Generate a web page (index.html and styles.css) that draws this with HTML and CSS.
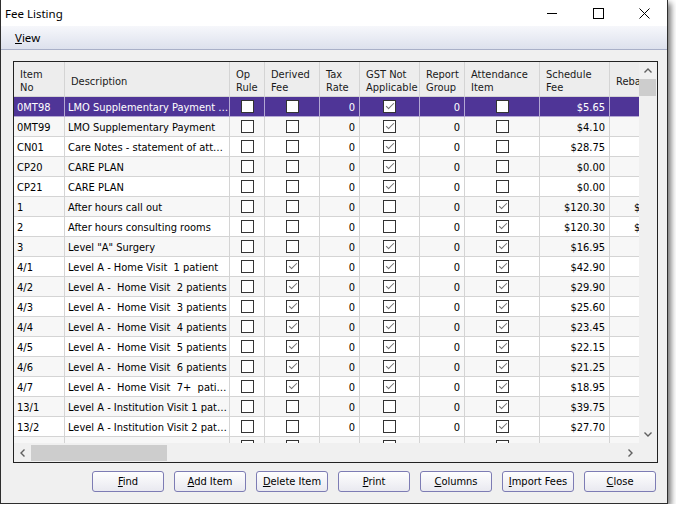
FILE: index.html
```html
<!DOCTYPE html>
<html lang="en">
<head>
    <meta charset="UTF-8">
    <title>Fee Listing</title>
    <link rel="stylesheet" href="styles.css">
</head>
<body>
    <div class="window">
        <div class="titlebar">
            <span class="title">Fee Listing</span>
            <div class="caption">
                <div class="cap-btn">
                    <svg width="10" height="10" viewBox="0 0 10 10"><line x1="0" y1="5.5" x2="10" y2="5.5" stroke="#000" stroke-width="1"/></svg>
                </div>
                <div class="cap-btn">
                    <svg width="11" height="11" viewBox="0 0 11 11"><rect x="0.5" y="0.5" width="10" height="10" fill="none" stroke="#000" stroke-width="1"/></svg>
                </div>
                <div class="cap-btn">
                    <svg width="11" height="11" viewBox="0 0 11 11"><path d="M0.5 0.5 L10.5 10.5 M10.5 0.5 L0.5 10.5" stroke="#000" stroke-width="1"/></svg>
                </div>
            </div>
        </div>

        <div class="menubar">
            <span class="menu-item"><u>V</u>iew</span>
        </div>

        <div class="content">
            <div class="grid">
                <div class="viewport">
                    <div class="row head">
                        <div class="c">Item<br>No</div>
                        <div class="c">Description</div>
                        <div class="c">Op<br>Rule</div>
                        <div class="c">Derived<br>Fee</div>
                        <div class="c">Tax<br>Rate</div>
                        <div class="c">GST Not<br>Applicable</div>
                        <div class="c">Report<br>Group</div>
                        <div class="c">Attendance<br>Item</div>
                        <div class="c">Schedule<br>Fee</div>
                        <div class="c">Rebate</div>
                    </div>

                    <div class="row sel">
                        <div class="c">0MT98</div><div class="c">LMO Supplementary Payment …</div>
                        <div class="c chk"><span class="cb"></span></div><div class="c chk"><span class="cb"></span></div>
                        <div class="c num">0</div><div class="c chk"><span class="cb on"></span></div>
                        <div class="c num">0</div><div class="c chk"><span class="cb"></span></div>
                        <div class="c num">$5.65</div><div class="c num"></div>
                    </div>
                    <div class="row alt">
                        <div class="c">0MT99</div><div class="c">LMO Supplementary Payment</div>
                        <div class="c chk"><span class="cb"></span></div><div class="c chk"><span class="cb"></span></div>
                        <div class="c num">0</div><div class="c chk"><span class="cb on"></span></div>
                        <div class="c num">0</div><div class="c chk"><span class="cb"></span></div>
                        <div class="c num">$4.10</div><div class="c num"></div>
                    </div>
                    <div class="row">
                        <div class="c">CN01</div><div class="c">Care Notes - statement of att…</div>
                        <div class="c chk"><span class="cb"></span></div><div class="c chk"><span class="cb"></span></div>
                        <div class="c num">0</div><div class="c chk"><span class="cb on"></span></div>
                        <div class="c num">0</div><div class="c chk"><span class="cb"></span></div>
                        <div class="c num">$28.75</div><div class="c num"></div>
                    </div>
                    <div class="row alt">
                        <div class="c">CP20</div><div class="c">CARE PLAN</div>
                        <div class="c chk"><span class="cb"></span></div><div class="c chk"><span class="cb"></span></div>
                        <div class="c num">0</div><div class="c chk"><span class="cb on"></span></div>
                        <div class="c num">0</div><div class="c chk"><span class="cb"></span></div>
                        <div class="c num">$0.00</div><div class="c num"></div>
                    </div>
                    <div class="row">
                        <div class="c">CP21</div><div class="c">CARE PLAN</div>
                        <div class="c chk"><span class="cb"></span></div><div class="c chk"><span class="cb"></span></div>
                        <div class="c num">0</div><div class="c chk"><span class="cb on"></span></div>
                        <div class="c num">0</div><div class="c chk"><span class="cb"></span></div>
                        <div class="c num">$0.00</div><div class="c num"></div>
                    </div>
                    <div class="row alt">
                        <div class="c">1</div><div class="c">After hours call out</div>
                        <div class="c chk"><span class="cb"></span></div><div class="c chk"><span class="cb"></span></div>
                        <div class="c num">0</div><div class="c chk"><span class="cb"></span></div>
                        <div class="c num">0</div><div class="c chk"><span class="cb on"></span></div>
                        <div class="c num">$120.30</div><div class="c num">$102.25</div>
                    </div>
                    <div class="row">
                        <div class="c">2</div><div class="c">After hours consulting rooms</div>
                        <div class="c chk"><span class="cb"></span></div><div class="c chk"><span class="cb"></span></div>
                        <div class="c num">0</div><div class="c chk"><span class="cb"></span></div>
                        <div class="c num">0</div><div class="c chk"><span class="cb on"></span></div>
                        <div class="c num">$120.30</div><div class="c num">$102.25</div>
                    </div>
                    <div class="row alt">
                        <div class="c">3</div><div class="c">Level "A" Surgery</div>
                        <div class="c chk"><span class="cb"></span></div><div class="c chk"><span class="cb"></span></div>
                        <div class="c num">0</div><div class="c chk"><span class="cb on"></span></div>
                        <div class="c num">0</div><div class="c chk"><span class="cb on"></span></div>
                        <div class="c num">$16.95</div><div class="c num"></div>
                    </div>
                    <div class="row">
                        <div class="c">4/1</div><div class="c">Level A - Home Visit  1 patient</div>
                        <div class="c chk"><span class="cb"></span></div><div class="c chk"><span class="cb on"></span></div>
                        <div class="c num">0</div><div class="c chk"><span class="cb on"></span></div>
                        <div class="c num">0</div><div class="c chk"><span class="cb on"></span></div>
                        <div class="c num">$42.90</div><div class="c num"></div>
                    </div>
                    <div class="row alt">
                        <div class="c">4/2</div><div class="c">Level A -  Home Visit  2 patients</div>
                        <div class="c chk"><span class="cb"></span></div><div class="c chk"><span class="cb on"></span></div>
                        <div class="c num">0</div><div class="c chk"><span class="cb on"></span></div>
                        <div class="c num">0</div><div class="c chk"><span class="cb on"></span></div>
                        <div class="c num">$29.90</div><div class="c num"></div>
                    </div>
                    <div class="row">
                        <div class="c">4/3</div><div class="c">Level A -  Home Visit  3 patients</div>
                        <div class="c chk"><span class="cb"></span></div><div class="c chk"><span class="cb on"></span></div>
                        <div class="c num">0</div><div class="c chk"><span class="cb on"></span></div>
                        <div class="c num">0</div><div class="c chk"><span class="cb on"></span></div>
                        <div class="c num">$25.60</div><div class="c num"></div>
                    </div>
                    <div class="row alt">
                        <div class="c">4/4</div><div class="c">Level A -  Home Visit  4 patients</div>
                        <div class="c chk"><span class="cb"></span></div><div class="c chk"><span class="cb on"></span></div>
                        <div class="c num">0</div><div class="c chk"><span class="cb on"></span></div>
                        <div class="c num">0</div><div class="c chk"><span class="cb on"></span></div>
                        <div class="c num">$23.45</div><div class="c num"></div>
                    </div>
                    <div class="row">
                        <div class="c">4/5</div><div class="c">Level A -  Home Visit  5 patients</div>
                        <div class="c chk"><span class="cb"></span></div><div class="c chk"><span class="cb on"></span></div>
                        <div class="c num">0</div><div class="c chk"><span class="cb on"></span></div>
                        <div class="c num">0</div><div class="c chk"><span class="cb on"></span></div>
                        <div class="c num">$22.15</div><div class="c num"></div>
                    </div>
                    <div class="row alt">
                        <div class="c">4/6</div><div class="c">Level A -  Home Visit  6 patients</div>
                        <div class="c chk"><span class="cb"></span></div><div class="c chk"><span class="cb on"></span></div>
                        <div class="c num">0</div><div class="c chk"><span class="cb on"></span></div>
                        <div class="c num">0</div><div class="c chk"><span class="cb on"></span></div>
                        <div class="c num">$21.25</div><div class="c num"></div>
                    </div>
                    <div class="row">
                        <div class="c">4/7</div><div class="c">Level A -  Home Visit  7+  pati…</div>
                        <div class="c chk"><span class="cb"></span></div><div class="c chk"><span class="cb on"></span></div>
                        <div class="c num">0</div><div class="c chk"><span class="cb on"></span></div>
                        <div class="c num">0</div><div class="c chk"><span class="cb on"></span></div>
                        <div class="c num">$18.95</div><div class="c num"></div>
                    </div>
                    <div class="row alt">
                        <div class="c">13/1</div><div class="c">Level A - Institution Visit 1 pat…</div>
                        <div class="c chk"><span class="cb"></span></div><div class="c chk"><span class="cb"></span></div>
                        <div class="c num">0</div><div class="c chk"><span class="cb"></span></div>
                        <div class="c num">0</div><div class="c chk"><span class="cb on"></span></div>
                        <div class="c num">$39.75</div><div class="c num"></div>
                    </div>
                    <div class="row">
                        <div class="c">13/2</div><div class="c">Level A - Institution Visit 2 pat…</div>
                        <div class="c chk"><span class="cb"></span></div><div class="c chk"><span class="cb"></span></div>
                        <div class="c num">0</div><div class="c chk"><span class="cb"></span></div>
                        <div class="c num">0</div><div class="c chk"><span class="cb on"></span></div>
                        <div class="c num">$27.70</div><div class="c num"></div>
                    </div>
                    <div class="row alt">
                        <div class="c">13/3</div><div class="c">Level A - Institution Visit 3 pat…</div>
                        <div class="c chk"><span class="cb"></span></div><div class="c chk"><span class="cb"></span></div>
                        <div class="c num">0</div><div class="c chk"><span class="cb"></span></div>
                        <div class="c num">0</div><div class="c chk"><span class="cb on"></span></div>
                        <div class="c num">$25.70</div><div class="c num"></div>
                    </div>
                </div>

                <div class="vscroll">
                    <div class="arrow">
                        <svg width="8" height="5" viewBox="0 0 8 5"><polyline points="0.5,4.5 4,1 7.5,4.5" fill="none" stroke="#606060" stroke-width="1.4"/></svg>
                    </div>
                    <div class="vthumb"></div>
                    <div class="spacer"></div>
                    <div class="arrow">
                        <svg width="8" height="5" viewBox="0 0 8 5"><polyline points="0.5,0.5 4,4 7.5,0.5" fill="none" stroke="#606060" stroke-width="1.4"/></svg>
                    </div>
                </div>

                <div class="hscroll">
                    <div class="arrow">
                        <svg width="5" height="8" viewBox="0 0 5 8"><polyline points="4.5,0.5 1,4 4.5,7.5" fill="none" stroke="#606060" stroke-width="1.4"/></svg>
                    </div>
                    <div class="hthumb"></div>
                    <div class="spacer"></div>
                    <div class="arrow">
                        <svg width="5" height="8" viewBox="0 0 5 8"><polyline points="0.5,0.5 4,4 0.5,7.5" fill="none" stroke="#606060" stroke-width="1.4"/></svg>
                    </div>
                </div>

                <div class="corner"></div>
            </div>

            <div class="buttons">
                <button class="btn"><u>F</u>ind</button>
                <button class="btn"><u>A</u>dd Item</button>
                <button class="btn"><u>D</u>elete Item</button>
                <button class="btn"><u>P</u>rint</button>
                <button class="btn"><u>C</u>olumns</button>
                <button class="btn"><u>I</u>mport Fees</button>
                <button class="btn"><u>C</u>lose</button>
            </div>
        </div>
    </div>
</body>
</html>
```

FILE: styles.css
```css
/* Global Styles */
* {
    margin: 0;
    padding: 0;
    box-sizing: border-box;
}

body {
    background: #fff;
    font-family: "DejaVu Sans Condensed", "DejaVu Sans", sans-serif;
    font-stretch: condensed;
    font-size: 11px;
    color: #000;
}

.window {
    width: 668px;
    height: 504px;
    background: #f0f0f0;
    border: 1px solid #2e2e2e;
    border-top: none;
    box-shadow: 3px 3px 6px rgba(0, 0, 0, 0.55);
    display: flex;
    flex-direction: column;
}

/* Title bar */
.titlebar {
    height: 26px;
    background: #fff;
    display: flex;
    align-items: center;
    justify-content: space-between;
    padding-left: 4px;
}

.title {
    font-family: "Noto Sans", "Open Sans", sans-serif;
    font-stretch: normal;
    font-size: 11.5px;
}

.caption {
    display: flex;
    height: 100%;
}

.cap-btn {
    width: 46px;
    display: flex;
    align-items: center;
    justify-content: center;
}

/* Menu */
.menubar {
    height: 24px;
    background: linear-gradient(#f6f7fb, #dde1ed);
    border-bottom: 1px solid #a9b0c8;
    display: flex;
    align-items: center;
    padding-left: 14px;
}

.menu-item {
    font-family: "Noto Sans", "Open Sans", sans-serif;
    font-stretch: normal;
    font-size: 11.5px;
}

.content {
    flex: 1;
    padding: 11px 9px 0 12px;
    display: flex;
    flex-direction: column;
}

/* Fee grid */
.grid {
    border: 1px solid #222;
    display: grid;
    grid-template-columns: 625px 18px;
    grid-template-rows: 381px 19px;
    background: #fff;
}

.viewport {
    overflow: hidden;
    background: #fff;
}

.row {
    display: grid;
    grid-template-columns: 51px 165px 35px 55px 40px 60px 45px 75px 70px 70px;
    width: 666px;
    height: 20px;
}

.c {
    border-right: 1px solid #d4d4d4;
    border-bottom: 1px solid #d4d4d4;
    padding: 1px 4px 0 3px;
    white-space: pre;
    overflow: hidden;
    display: flex;
    align-items: center;
}

.head {
    height: 35px;
    background: #ededed;
}

.head .c {
    line-height: 13px;
    padding-top: 4px;
    padding-left: 6px;
    color: #1a1a1a;
}

.alt {
    background: #f7f7f7;
}

.sel {
    background: #4f3597;
    color: #fff;
}

.sel .c {
    border-color: #b3a8d4;
}

.num {
    justify-content: flex-end;
}

.chk {
    justify-content: center;
    padding: 0;
}

.cb {
    width: 13px;
    height: 13px;
    border: 1px solid #333;
    background: #fff;
    position: relative;
}

.cb.on::after {
    content: "";
    position: absolute;
    left: 2px;
    top: 2px;
    width: 7px;
    height: 3px;
    border-left: 1px solid #707070;
    border-bottom: 1px solid #707070;
    transform: rotate(-45deg);
}

/* Scrollbars */
.vscroll {
    background: #f0f0f0;
    display: flex;
    flex-direction: column;
}

.vscroll .arrow {
    height: 17px;
    display: flex;
    align-items: center;
    justify-content: center;
}

.vthumb {
    height: 17px;
    width: 17px;
    background: #cdcdcd;
}

.spacer {
    flex: 1;
}

.hscroll {
    background: #f0f0f0;
    display: flex;
    align-items: center;
}

.hscroll .arrow {
    width: 17px;
    display: flex;
    align-items: center;
    justify-content: center;
}

.hthumb {
    width: 136px;
    height: 16px;
    background: #cdcdcd;
}

.corner {
    background: #f0f0f0;
}

/* Buttons */
.buttons {
    margin-top: 8px;
    margin-right: 2px;
    display: flex;
    justify-content: flex-end;
    gap: 10px;
}

.btn {
    width: 72px;
    height: 21px;
    border: 1px solid #7d7cb4;
    border-radius: 3px;
    background: linear-gradient(#fefefe, #e9e9f0);
    font-family: inherit;
    font-stretch: condensed;
    font-size: 11px;
    color: #000;
}
```
